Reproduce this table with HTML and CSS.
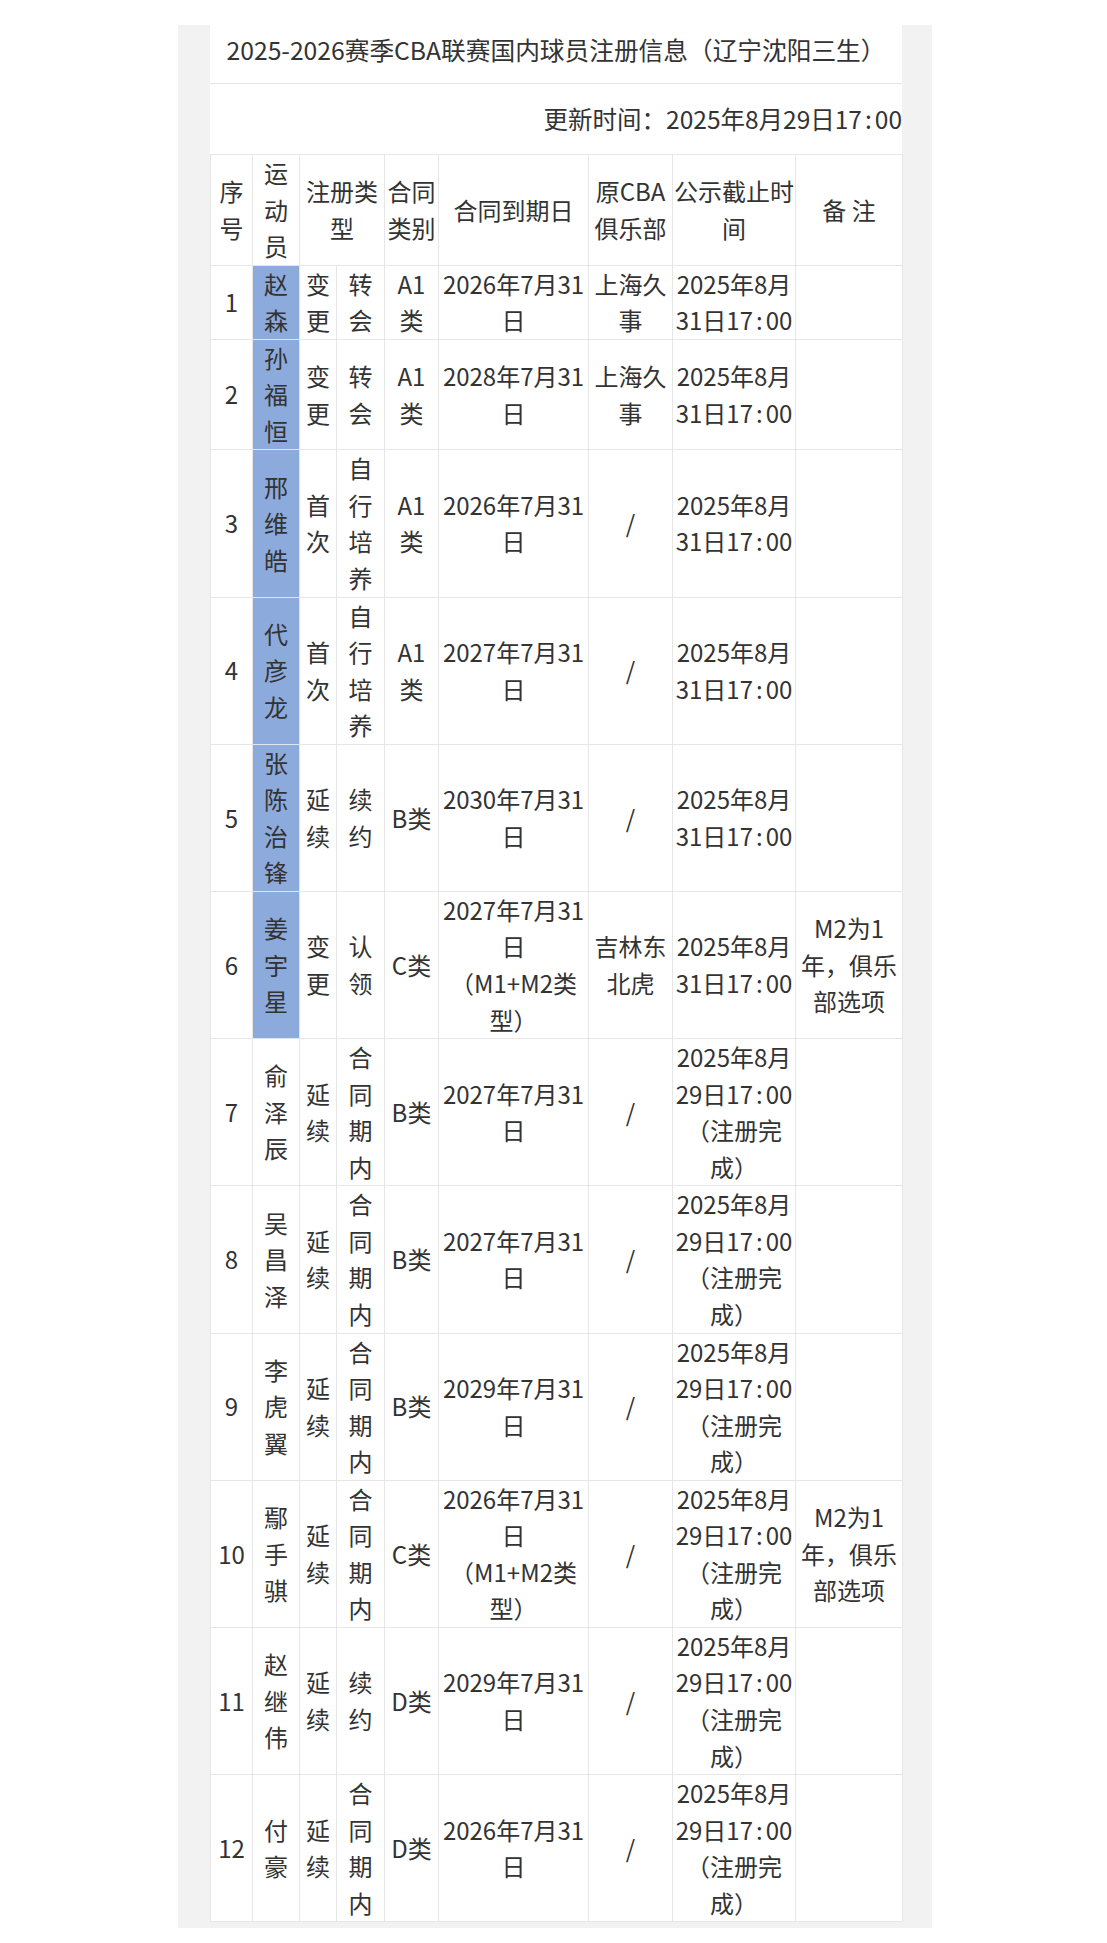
FILE: index.html
```html
<!DOCTYPE html>
<html lang="zh-CN">
<head>
<meta charset="utf-8">
<title>2025-2026赛季CBA联赛国内球员注册信息（辽宁沈阳三生）</title>
<link rel="stylesheet" href="styles.css">
</head>
<body>
<div class="page">
  <div class="sheet">
    <div class="title">2025-2026赛季CBA联赛国内球员注册信息（辽宁沈阳三生）</div>
    <div class="updated">更新时间：2025年8月29日17<span class="c">:</span>00</div>
    <table class="reg">
      <colgroup>
        <col class="w-no"><col class="w-name"><col class="w-t1"><col class="w-t2"><col class="w-cat"><col class="w-exp"><col class="w-club"><col class="w-pub"><col class="w-note">
      </colgroup>
      <thead>
        <tr><th>序号</th><th>运动员</th><th colspan="2">注册类型</th><th>合同类别</th><th>合同到期日</th><th>原CBA俱乐部</th><th>公示截止时间</th><th>备 注</th></tr>
      </thead>
      <tbody>
        <tr><td>1</td><td class="hl">赵森</td><td>变更</td><td>转会</td><td>A1类</td><td>2026年7月31日</td><td>上海久事</td><td>2025年8月31日17<span class="c">:</span>00</td><td></td></tr>
        <tr><td>2</td><td class="hl">孙福恒</td><td>变更</td><td>转会</td><td>A1类</td><td>2028年7月31日</td><td>上海久事</td><td>2025年8月31日17<span class="c">:</span>00</td><td></td></tr>
        <tr><td>3</td><td class="hl">邢维皓</td><td>首次</td><td>自行培养</td><td>A1类</td><td>2026年7月31日</td><td>/</td><td>2025年8月31日17<span class="c">:</span>00</td><td></td></tr>
        <tr><td>4</td><td class="hl">代彦龙</td><td>首次</td><td>自行培养</td><td>A1类</td><td>2027年7月31日</td><td>/</td><td>2025年8月31日17<span class="c">:</span>00</td><td></td></tr>
        <tr><td>5</td><td class="hl">张陈治锋</td><td>延续</td><td>续约</td><td>B类</td><td>2030年7月31日</td><td>/</td><td>2025年8月31日17<span class="c">:</span>00</td><td></td></tr>
        <tr><td>6</td><td class="hl">姜宇星</td><td>变更</td><td>认领</td><td>C类</td><td>2027年7月31日<br>（M1+M2类型）</td><td>吉林东北虎</td><td>2025年8月31日17<span class="c">:</span>00</td><td>M2为1年，俱乐部选项</td></tr>
        <tr><td>7</td><td>俞泽辰</td><td>延续</td><td>合同期内</td><td>B类</td><td>2027年7月31日</td><td>/</td><td>2025年8月29日17<span class="c">:</span>00（注册完成）</td><td></td></tr>
        <tr><td>8</td><td>吴昌泽</td><td>延续</td><td>合同期内</td><td>B类</td><td>2027年7月31日</td><td>/</td><td>2025年8月29日17<span class="c">:</span>00（注册完成）</td><td></td></tr>
        <tr><td>9</td><td>李虎翼</td><td>延续</td><td>合同期内</td><td>B类</td><td>2029年7月31日</td><td>/</td><td>2025年8月29日17<span class="c">:</span>00（注册完成）</td><td></td></tr>
        <tr><td>10</td><td>鄢手骐</td><td>延续</td><td>合同期内</td><td>C类</td><td>2026年7月31日<br>（M1+M2类型）</td><td>/</td><td>2025年8月29日17<span class="c">:</span>00（注册完成）</td><td>M2为1年，俱乐部选项</td></tr>
        <tr><td>11</td><td>赵继伟</td><td>延续</td><td>续约</td><td>D类</td><td>2029年7月31日</td><td>/</td><td>2025年8月29日17<span class="c">:</span>00（注册完成）</td><td></td></tr>
        <tr><td>12</td><td>付豪</td><td>延续</td><td>合同期内</td><td>D类</td><td>2026年7月31日</td><td>/</td><td>2025年8月29日17<span class="c">:</span>00（注册完成）</td><td></td></tr>
      </tbody>
    </table>
  </div>
</div>
</body>
</html>
```

FILE: styles.css
```css
html, body {
  margin: 0;
  padding: 0;
  background: #ffffff;
}

body {
  font-family: "Noto Sans CJK SC", "Noto Sans", sans-serif;
  font-size: 24px;
  color: #333333;
  text-spacing-trim: space-all;
}

.page {
  margin: 25px 0 0 178px;
  width: 754px;
  box-sizing: border-box;
  padding: 0 30px 6px 32px;
  background: #f2f2f2;
}

.sheet {
  background: #ffffff;
}

.title {
  height: 59px;
  box-sizing: border-box;
  padding-top: 6px;
  font-size: 24.7px;
  line-height: 36px;
  text-align: center;
  border-bottom: 1px solid #e6e6e6;
  white-space: nowrap;
}

.updated {
  height: 70px;
  line-height: 70px;
  font-size: 24.5px;
  text-align: right;
  white-space: nowrap;
}

.c {
  margin: 0 3px;
}

.reg {
  width: 692px;
  border-collapse: collapse;
  table-layout: fixed;
}

.reg th,
.reg td {
  border: 1px solid #e6e6e6;
  padding: 0 1px;
  line-height: 36.55px;
  font-weight: normal;
  text-align: center;
  vertical-align: middle;
  word-break: normal;
}

.reg .hl {
  background: #8caadc;
  border-color: #dfe6f2;
}

.w-no { width: 42px; }
.w-name { width: 47px; }
.w-t1 { width: 37px; }
.w-t2 { width: 48px; }
.w-cat { width: 54px; }
.w-exp { width: 150px; }
.w-club { width: 84px; }
.w-pub { width: 123px; }
.w-note { width: 107px; }
```
